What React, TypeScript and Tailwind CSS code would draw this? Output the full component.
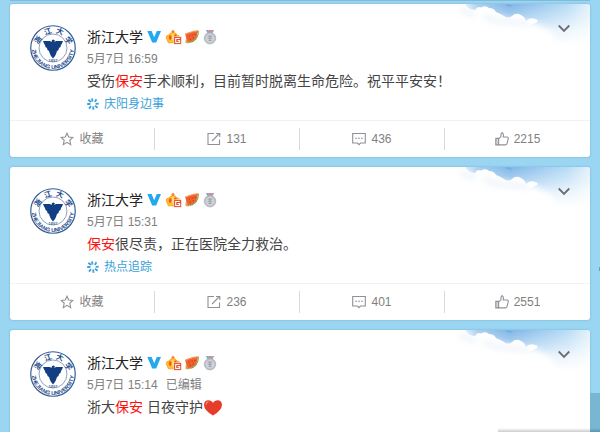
import { useState } from "react";

type Post = {
	id: number;
	time: string;
	edited?: boolean;
	before: string;
	keyword: string;
	after: string;
	heart?: boolean;
	topic?: string;
	stats?: { reposts: number; comments: number; likes: number };
};

const posts: Post[] = [
	{
		id: 1,
		time: "5月7日 16:59",
		before: "受伤",
		keyword: "保安",
		after: "手术顺利，目前暂时脱离生命危险。祝平平安安！",
		topic: "庆阳身边事",
		stats: { reposts: 131, comments: 436, likes: 2215 },
	},
	{
		id: 2,
		time: "5月7日 15:31",
		before: "",
		keyword: "保安",
		after: "很尽责，正在医院全力救治。",
		topic: "热点追踪",
		stats: { reposts: 236, comments: 401, likes: 2551 },
	},
	{
		id: 3,
		time: "5月7日 15:14",
		edited: true,
		before: "浙大",
		keyword: "保安",
		after: " 日夜守护",
		heart: true,
	},
];

// University seal used as the avatar
function Seal({ id }: { id: number }) {
	return (
		<svg viewBox="0 0 92 92" className="size-[46px] shrink-0" fill="none" aria-hidden="true">
			<defs>
				<path id={`ring-${id}`} d="M4 46 A42 42 0 0 0 88 46" />
			</defs>
			<circle cx="46" cy="46" r="44.5" fill="#fff" stroke="#335b94" strokeWidth="2.4" />
			<circle cx="46" cy="46" r="28" stroke="#6d8ab5" strokeWidth="1.6" />
			<g fill="#1c4788" fontFamily="'Noto Sans CJK SC', sans-serif" fontWeight="700" fontSize="15" textAnchor="middle">
				<text transform="translate(20 33) rotate(-52)">浙</text>
				<text transform="translate(37 18) rotate(-17)">江</text>
				<text transform="translate(58 18) rotate(19)">大</text>
				<text transform="translate(73 34) rotate(54)">学</text>
			</g>
			<text fill="#1c4788" fontFamily="'Liberation Sans', sans-serif" fontWeight="700" fontSize="11">
				<textPath href={`#ring-${id}`} startOffset="50%" textAnchor="middle">ZHEJIANG UNIVERSITY</textPath>
				<tspan x="46" y="74" fill="#4d70a3" fontSize="8" textAnchor="middle">1897</tspan>
			</text>
			<path
				d="M26 32 H40 L43 34 L44 30 L47 29 L50 31 L48 34 L52 32 H66 L64 37 L62 40 L61 44 L58 46 L57 50 L54 52 L52 58 L50 62 L46 67 L42 62 L40 58 L38 52 L35 50 L34 46 L31 44 L30 40 L28 37 Z"
				fill="#123f84"
			/>
		</svg>
	);
}

function Badges() {
	return (
		<span className="ml-1 flex items-center">
			<svg viewBox="0 0 14 14" className="h-3.5 w-3.5" aria-hidden="true">
				<path d="M0.3 1 H4.6 L7.2 7.2 L9.8 1 H14 L9.2 12.6 H5.2 Z" fill="#25a9ee" />
			</svg>
			<svg viewBox="0 0 18 16" className="ml-1 h-4 w-[18px]" aria-hidden="true">
				<path d="M3.4 13.8 L1.2 8.6 Q1.2 6 4 6 Q5 3.6 8 3.6 Q11 3.6 12 6 Q14.8 6 14.8 8.6 L12.8 13.8 Z" fill="#ffc02a" stroke="#f59a1c" strokeWidth="0.8" />
				<circle cx="8" cy="2.6" r="1.5" fill="#f9852a" />
				<ellipse cx="5.2" cy="8.6" rx="1.3" ry="2.4" fill="#f4502b" />
				<ellipse cx="10.4" cy="7.6" rx="1.3" ry="2.2" fill="#f4502b" />
				<path d="M8 4.4 V11" stroke="#ffe377" strokeWidth="1.4" />
				<rect x="8.8" y="7.8" width="7.6" height="7.4" fill="#e4502f" stroke="#fff" strokeWidth="0.5" />
				<path d="M14.8 9.5 H10.7 V13.5 H14.6 V11.6 H12.6" fill="none" stroke="#fff" strokeWidth="1.1" />
			</svg>
			<svg viewBox="0 0 16 16" className="ml-px size-4" aria-hidden="true">
				<path d="M14 1.5 L12.5 8.6 Q10.8 11.4 7.4 12.6 L2.8 14.4 L2.4 10 L1.2 5 Q7.5 2.8 14 1.5 Z" fill="#f4602f" />
				<path d="M14.4 1.8 Q14.6 6.4 12 9.8 Q9.4 12.8 5.6 13.4" fill="none" stroke="#7f9d3a" strokeWidth="1.1" />
				<path d="M1.2 5.4 Q5.6 2.7 13.4 1.8" fill="none" stroke="#ef9d59" strokeWidth="1.3" />
				<path d="M5 6.5 l.4 1 M8 5.5 l.3 1 M10.8 5 l.3 1 M6 9.7 l.4 1 M9 8.4 l.4 1" stroke="#8e301b" strokeWidth="0.9" />
				<path d="M1.8 9.4 L1.4 13.7 L5.4 14.4 Z" fill="#c3ad55" />
			</svg>
			<svg viewBox="0 0 14 16" className="ml-[3px] h-4 w-3.5" aria-hidden="true">
				<path d="M2.8 1 H5.4 L7 4 L5 5 Z" fill="#8fa3cd" />
				<path d="M11.2 1 H8.6 L7 4 L9 5 Z" fill="#8fa3cd" />
				<path d="M5.4 1 H8.6 L7 4.5 Z" fill="#e0846d" />
				<circle cx="7" cy="9.2" r="5.8" fill="#bcc1c7" stroke="#a3aab2" strokeWidth="0.6" />
				<circle cx="7" cy="9.2" r="4.3" fill="#cfd3d8" />
				<path d="M4.8 7.2 H9.2 M4.8 9.3 H9 M5.6 11.5 H8.4 M7 6.4 V11.8" stroke="#969da6" strokeWidth="0.9" />
			</svg>
		</span>
	);
}

// Sky and clouds in the corner of each card
function Clouds({ id }: { id: number }) {
	return (
		<svg viewBox="0 0 160 48" className="pointer-events-none absolute right-0 top-0 h-12 w-40" aria-hidden="true">
			<defs>
				<linearGradient id={`sky-${id}`}>
					<stop offset="0.12" stopColor="#d9eafa" stopOpacity="0" />
					<stop offset="0.3" stopColor="#a9cef0" />
					<stop offset="0.5" stopColor="#7fb5e8" />
					<stop offset="0.68" stopColor="#9bc9ef" />
					<stop offset="0.86" stopColor="#b9dcf5" />
					<stop offset="1" stopColor="#e3f1fb" />
				</linearGradient>
				<linearGradient id={`fade-${id}`} x1="0" y1="0" x2="0" y2="1">
					<stop offset="0" stopColor="#fff" />
					<stop offset="0.3" stopColor="#fff" stopOpacity="0.62" />
					<stop offset="0.55" stopColor="#fff" stopOpacity="0.25" />
					<stop offset="0.85" stopColor="#fff" stopOpacity="0" />
				</linearGradient>
				<mask id={`mask-${id}`}>
					<rect width="160" height="48" fill={`url(#fade-${id})`} />
				</mask>
				<filter id={`soft-${id}`} filterUnits="userSpaceOnUse" x="-60" y="-60" width="280" height="180">
					<feGaussianBlur stdDeviation="0.6" />
				</filter>
				<filter id={`wide-${id}`} filterUnits="userSpaceOnUse" x="-60" y="-60" width="280" height="180">
					<feGaussianBlur stdDeviation="3" />
				</filter>
			</defs>
			<rect width="160" height="48" fill={`url(#sky-${id})`} mask={`url(#mask-${id})`} />
			<path d="M-20 -10 L20 -6 L40 10 L66 14 L104 19 L122 28 L134 60 H-20 Z" fill="#fff" filter={`url(#wide-${id})`} />
			<path
				d="M26 -2 H34 Q38 6 45 6 Q47 2 51 3.5 Q56 1 59 4 Q64 4 66 8 Q71 10 74 12 Q78 15 82 12 Q86 8 91 11 Q95 13 96 17 Q100 13 105 15 Q109 16 107 18 Q98 23 90 25 Q60 32 36 26 Q24 14 26 -2 Z"
				fill="#fff"
				filter={`url(#soft-${id})`}
			/>
			<path
				d="M30 5 Q36 9 46 10 M54 12 Q62 17 78 18 Q90 19 98 20"
				fill="none"
				stroke="#d5e2f3"
				strokeWidth="4"
				opacity="0.5"
				filter={`url(#wide-${id})`}
			/>
			<path d="M76 1 L82 2" stroke="#5e9bdc" strokeWidth="1.5" opacity="0.4" filter={`url(#soft-${id})`} />
		</svg>
	);
}

function TopicIcon() {
	return (
		<svg viewBox="0 0 12 12" className="size-3" fill="none" stroke="#39a2d8" strokeWidth="1.8" aria-hidden="true">
			<path d="M5 .3 L5.5 3.6 M9.4 1.2 L7.9 3.9 M11.7 5.6 L8.6 5.9 M10.6 9.8 L8 7.8 M6.4 11.7 L6.2 8.5 M2 10.6 L4 8.2 M.2 6 L3.4 6 M1.4 1.8 L3.9 4" />
		</svg>
	);
}

const iconProps = {
	viewBox: "0 0 14 14",
	className: "size-3.5",
	fill: "none",
	stroke: "#8f9098",
	strokeWidth: 1.1,
	"aria-hidden": true,
};

function Actions({ stats }: { stats: NonNullable<Post["stats"]> }) {
	const button = "flex h-[22px] items-center justify-center gap-[5px] border-[#d9d9d9] text-xs text-[#808080]";
	return (
		<div className="grid h-[37px] grid-cols-4 items-center border-t border-[#f2f2f5]">
			<button type="button" className={`${button} border-r`}>
				<svg {...iconProps}>
					<path d="M7 1.2 L8.7 5 L12.9 5.4 L9.8 8.3 L10.7 12.6 L7 10.4 L3.3 12.6 L4.2 8.3 L1.1 5.4 L5.3 5 Z" />
				</svg>
				收藏
			</button>
			<button type="button" aria-label={`转发 ${stats.reposts}`} className={`${button} border-r`}>
				<svg {...iconProps}>
					<path d="M7 1.5 H1 V12.5 H12.5 V7.5 M5 9 L12.5 1.5 M9 1.5 H12.8 V5" />
				</svg>
				{stats.reposts}
			</button>
			<button type="button" aria-label={`评论 ${stats.comments}`} className={`${button} border-r`}>
				<svg {...iconProps}>
					<path d="M.7 1.5 H13.3 V11 H8.5 L7 12.6 L5.5 11 H.7 Z" />
					<path d="M3.2 6.2 H5 M6.1 6.2 H7.9 M9 6.2 H10.8" />
				</svg>
				{stats.comments}
			</button>
			<button type="button" aria-label={`赞 ${stats.likes}`} className={button}>
				<svg {...iconProps}>
					<path d="M.8 6.4 H3.6 V12.9 H.8 Z" fill="#d5d5da" />
					<path d="M3.6 6.8 L5.8 4.8 L6.3 1.5 Q6.6 .6 7.6 .9 Q8.8 1.5 8.2 5 H12 Q13.5 5.2 13.2 6.8 L12 11.6 Q11.6 12.9 10.3 12.9 H3.6" />
				</svg>
				{stats.likes}
			</button>
		</div>
	);
}

function Card({ post }: { post: Post }) {
	return (
		<article
			className={`relative shrink-0 overflow-hidden rounded-[3px] bg-white shadow-[0_0_2px_rgba(60,120,160,0.45)] ${post.stats ? "" : "min-h-36 flex-1"}`}
		>
			<Clouds id={post.id} />
			<button type="button" aria-label="更多" className="absolute right-5 top-[18px] flex h-3 w-3">
				<svg viewBox="0 0 12 12" className="size-3" fill="none" stroke="#6f6d77" strokeWidth="1.9" aria-hidden="true">
					<path d="M.7 3.5 L6 8.8 L11.3 3.5" />
				</svg>
			</button>
			<div className="flex gap-[11px] px-5 pb-1 pt-[21px]">
				<Seal id={post.id} />
				<div className="min-w-0 flex-1">
					<div className="flex h-[23px] items-center">
						<a href="#profile" className="whitespace-nowrap text-sm text-[#222]">浙江大学</a>
						<Badges />
					</div>
					<p className="flex h-[22px] items-center gap-2 text-xs text-[#808080]">
						<a href="#post">{post.time}</a>
						{post.edited && <span>已编辑</span>}
					</p>
					<p className="text-sm leading-[22px] text-[#444]">
						{post.before}
						<span className="text-[#fb1010]">{post.keyword}</span>
						{post.after}
						{post.heart && (
							<svg viewBox="0 0 20 18" className="inline-block h-[18px] w-5 align-middle" role="img" aria-label="心">
								<path d="M10 16.6 Q1 11.5 1 5.8 Q1.2 1.2 5.3 1.2 Q8.6 1.2 10 4 Q11.4 1.2 14.7 1.2 Q18.8 1.4 19 5.8 Q18.8 11.5 10 16.6 Z" fill="#e63c2a" />
								<path d="M3 5.8 Q3.2 3.2 5.6 2.9" stroke="#f68270" strokeWidth="1.2" fill="none" />
							</svg>
						)}
					</p>
					{post.topic && (
						<a href="#topic" className="flex h-6 w-fit items-center gap-[5px] text-xs text-[#39a2d8]">
							<TopicIcon />
							{post.topic}
						</a>
					)}
				</div>
			</div>
			{post.stats && <Actions stats={post.stats} />}
		</article>
	);
}

export default function App() {
	const [list] = useState(posts);

	return (
		<main className="relative flex h-screen flex-col gap-2.5 overflow-hidden bg-[#9ad5f2] px-2.5 pt-1 font-['Liberation_Sans','Noto_Sans_CJK_SC',sans-serif]">
			{/* lower edge of the card scrolled off above */}
			<div className="absolute inset-x-2.5 top-0 h-px bg-[#83bad5]" />
			{list.map((post) => (
				<Card key={post.id} post={post} />
			))}
			{/* floating side bar and message dock */}
			<div className="absolute bottom-0 right-0 h-[39px] w-2.5 bg-[#78b6d4]" />
			<div className="absolute right-0 top-[267px] h-1 w-px bg-[#5ba9b8]" />
			<div className="absolute bottom-0 right-0 h-1 w-[102px] bg-linear-to-b from-transparent to-black/20" />
		</main>
	);
}
